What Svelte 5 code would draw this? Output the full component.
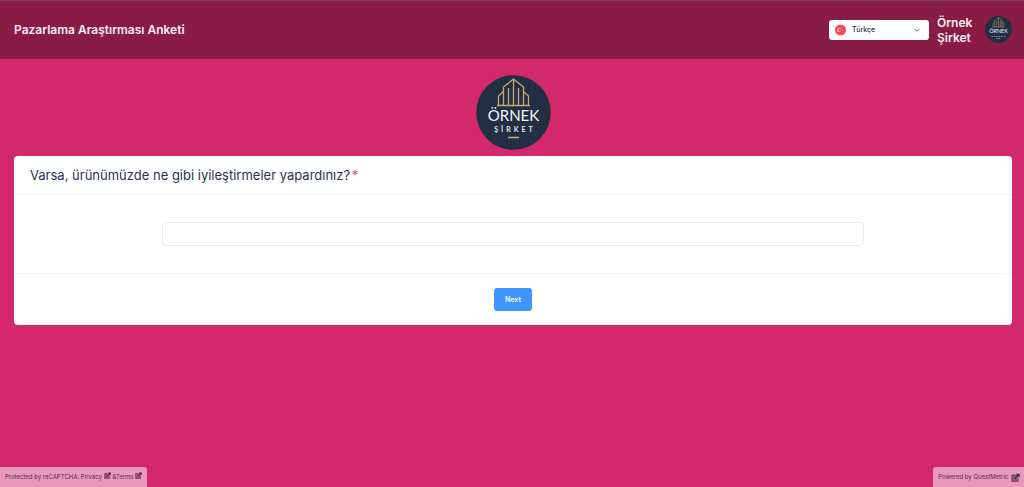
<script>
  let language = $state('tr');
  let answer = $state('');

  function submitAnswer(event) {
    event.preventDefault();
  }
</script>

{#snippet logo()}
  <svg class="logo" viewBox="0 0 75 75" role="img" aria-label="Örnek Şirket">
    <circle cx="37.5" cy="37.5" r="37.3" fill="#222f42" />
    <g fill="none" stroke="#c9a775" stroke-width="1.3">
      <path d="M21 30.5H54" />
      <path d="M22.5 30V21L27.5 16.5V12L37.5 4L47.5 12V16.5L52.5 21V30" />
      <path d="M27.5 30V16M32.5 30V13M37.5 30V4M42.500 30V13M47.5 30V16" />
      <path d="M32 62.5H43" stroke-width="1.6" />
    </g>
    <text x="37.5" y="46" font-size="15" fill="#f4f5f7">ÖRNEK</text>
    <text class="logo-sub" x="39" y="57" font-size="7" fill="#e4e7eb">ŞİRKET</text>
  </svg>
{/snippet}

{#snippet external()}
  <svg class="external" viewBox="0 0 12 12" aria-hidden="true">
    <path d="M1 2.5H9.500V11.5H1Z" fill="#8d5573" />
    <path d="M6 2.500H1V11.500H9.500V7" fill="none" stroke="#70405f" stroke-width="1" />
    <path d="M5 7.500L10 2" fill="none" stroke="#30243a" stroke-width="1.5" />
    <path d="M6.500 1H11.500V6Z" fill="#30243a" />
  </svg>
{/snippet}

<div class="page">
  <header>
    <h1>Pazarlama Araştırması Anketi</h1>
    <div class="company">
      <div class="language">
        <svg class="flag" viewBox="0 0 12 12" aria-hidden="true">
          <circle cx="6" cy="6" r="6" fill="#fa4655" />
          <circle cx="4.7" cy="6" r="2.3" fill="#fff" />
          <circle cx="5.4" cy="6" r="1.8" fill="#fa4655" />
          <path d="M7 6L8.8 5.3L8 6L8.8 6.7Z" fill="#fff" />
        </svg>
        <select bind:value={language} aria-label="Dil">
          <option value="tr">Türkçe</option>
          <option value="en">English</option>
        </select>
        <svg class="chevron" viewBox="0 0 8 8" aria-hidden="true">
          <path d="M1.5 2.8L4 5.3L6.5 2.8" fill="none" stroke="#6b7280" />
        </svg>
      </div>
      <span class="company-name">Örnek Şirket</span>
      <div class="company-logo">{@render logo()}</div>
    </div>
  </header>

  <main>
    <div class="survey-logo">{@render logo()}</div>
    <form class="card" onsubmit={submitAnswer}>
      <div class="question">
        <label for="answer">Varsa, ürünümüzde ne gibi iyileştirmeler yapardınız?</label>
        <span class="required">*</span>
      </div>
      <div class="answer">
        <input id="answer" type="text" bind:value={answer} required />
      </div>
      <div class="actions">
        <button type="submit">Next</button>
      </div>
    </form>
  </main>

  <footer>
    <div class="note left">
      <span>Protected by reCAPTCHA: <a href="/privacy">Privacy {@render external()}</a> &amp;<a href="/terms">Terms {@render external()}</a></span>
    </div>
    <div class="note right">
      <a href="/">Powered by QuestMetric {@render external()}</a>
    </div>
  </footer>
</div>

<style>
  :global(body) {
    margin: 0;
    background: #d3296b;
  }

  .page {
    display: flex;
    flex-direction: column;
    min-height: 100vh;
    font-family: Inter, "Liberation Sans", sans-serif;
    color: #24344f;
  }

  header {
    display: flex;
    align-items: center;
    justify-content: space-between;
    box-sizing: border-box;
    min-height: 59px;
    padding: 0 12px 1px 14px;
    border-top: 1px solid #704654;
    background: #891c45;
    color: #fbeef3;
  }

  h1 {
    margin: 0;
    font-size: 12px;
    line-height: 16px;
    font-weight: 600;
  }

  .company {
    display: flex;
    align-items: center;
    gap: 8px;
  }

  .language {
    position: relative;
    width: 100px;
  }

  .language select {
    display: block;
    appearance: none;
    width: 100%;
    height: 20px;
    padding: 0 20px 0 23px;
    border: 0;
    border-radius: 3px;
    background: #fff;
    color: #24344f;
    font: 500 7px Inter, "Liberation Sans", sans-serif;
  }

  .flag,
  .chevron {
    position: absolute;
    top: 50%;
    transform: translateY(-50%);
    pointer-events: none;
  }

  .flag {
    left: 6px;
    width: 11px;
    height: 11px;
  }

  .chevron {
    right: 8px;
    width: 8px;
    height: 8px;
  }

  .company-name {
    width: 40px;
    font-size: 12px;
    line-height: 15px;
    font-weight: 600;
  }

  .company-logo {
    width: 27px;
    height: 27px;
  }

  .logo {
    display: block;
    width: 100%;
    height: 100%;
    font-family: Lato, sans-serif;
    text-anchor: middle;
  }

  .logo-sub {
    font-weight: 700;
    letter-spacing: 3px;
  }

  main {
    flex: 1;
    padding: 16px 12px 16px 14px;
  }

  .survey-logo {
    width: 75px;
    height: 75px;
    margin: 0 auto 6px;
  }

  .card {
    border-radius: 4px;
    background: #fff;
  }

  .question {
    padding: 9px 16px;
    border-bottom: 1px solid #f4f5f7;
    font-size: 13px;
    line-height: 20px;
  }

  .required {
    margin-left: -2px;
    color: #f8466b;
  }

  .answer {
    padding: 27px 18px;
    border-bottom: 1px solid #f4f5f7;
  }

  .answer input {
    display: block;
    box-sizing: border-box;
    width: 73%;
    height: 24px;
    margin: 0 auto;
    padding: 0 8px;
    border: 1px solid #e8eaef;
    border-radius: 4px;
    background: #fff;
    color: inherit;
    font: 10px Inter, "Liberation Sans", sans-serif;
  }

  .actions {
    display: flex;
    justify-content: center;
    padding: 14px;
  }

  button {
    height: 23px;
    padding: 0 11px;
    border: 0;
    border-radius: 3px;
    background: #3e97ff;
    color: #fff;
    font: 600 7px Inter, "Liberation Sans", sans-serif;
    cursor: pointer;
  }

  footer {
    display: flex;
    justify-content: space-between;
  }

  .note {
    padding: 0 5px;
    background: #e998b8;
    color: #4f3152;
    font-size: 6px;
    line-height: 20px;
  }

  .left {
    border-top-right-radius: 3px;
  }

  .right {
    padding-right: 4px;
    border-top-left-radius: 3px;
  }

  a {
    color: inherit;
    text-decoration: none;
  }

  .external {
    width: 7px;
    height: 7px;
  }

  .right .external {
    width: 9px;
    height: 9px;
    margin-left: 1px;
    vertical-align: middle;
  }
</style>
